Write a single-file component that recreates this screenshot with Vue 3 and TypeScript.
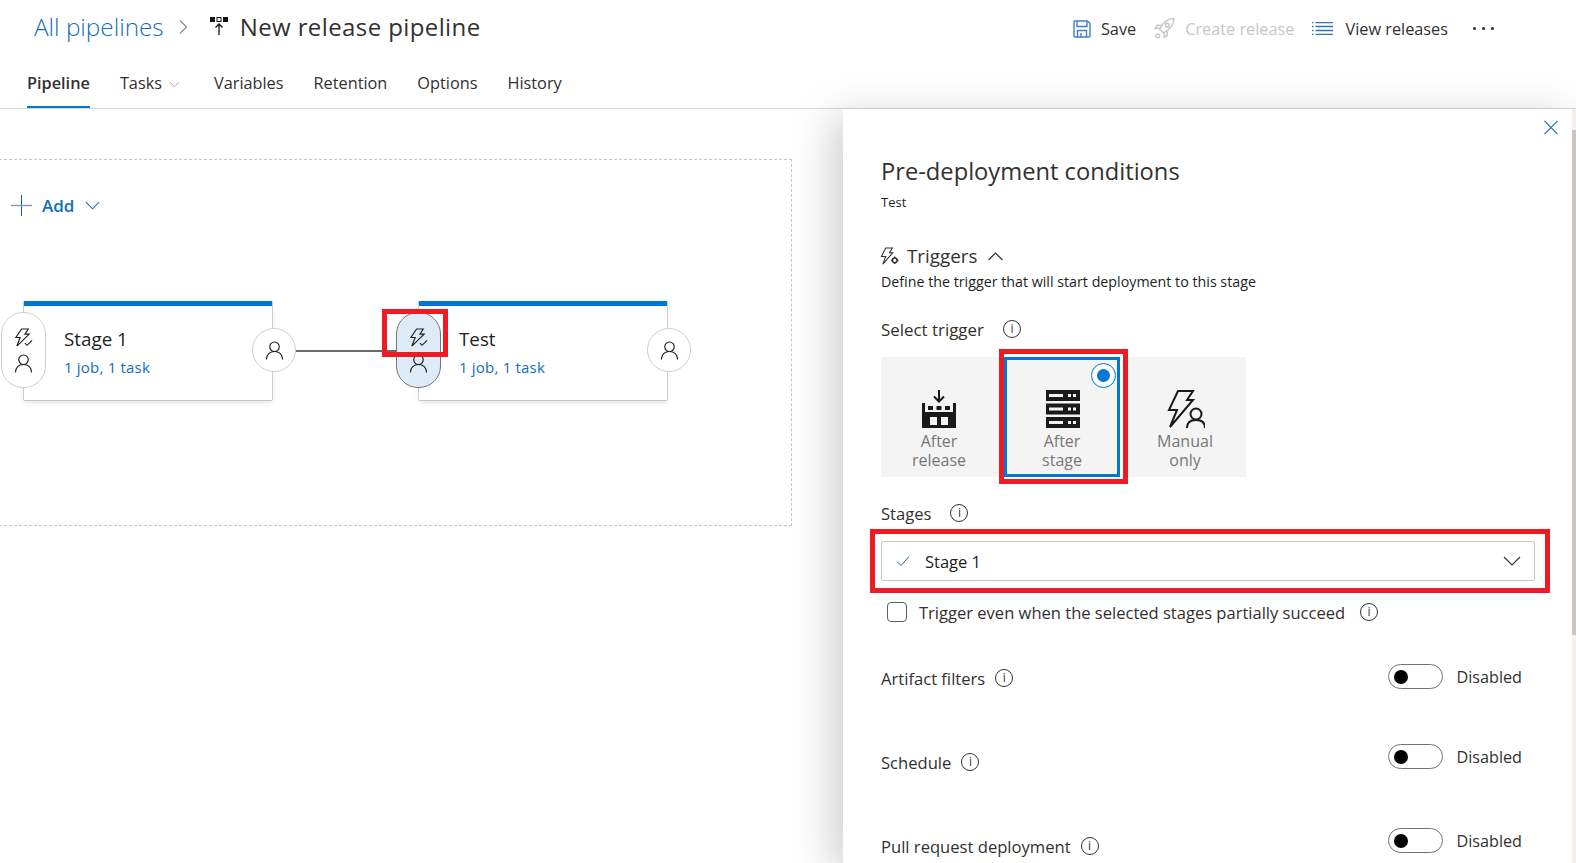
<template>
  <div class="page">
    <header class="top">
      <div class="title-row">
        <div class="crumbs">
          <a class="all">All pipelines</a>
          <svg class="crumb-sep" viewBox="0 0 9 14"><path d="M1 .5l6.500 6.500L1 13.500" fill="none" stroke="#8a8886" stroke-width="1.200" /></svg>
          <svg class="pipe-icon" viewBox="0 0 18 18">
            <rect x="0" y="0" width="5" height="5" fill="#111" />
            <rect x="7" y=".5" width="4" height="4" fill="#fff" stroke="#111" />
            <rect x="13" y="0" width="5" height="5" fill="#111" />
            <path d="M9 18V7M5.500 10.500L9 7l3.500 3.500" fill="none" stroke="#111" stroke-width="1.300" />
          </svg>
          <span class="name">New release pipeline</span>
        </div>
        <div class="actions">
          <span class="action">
            <svg class="act-icon" viewBox="0 0 18 18" fill="none" stroke="#3f7fd0" stroke-width="1.400">
              <path d="M2 1h12.500L17 3.500V16a1 1 0 0 1-1 1H2a1 1 0 0 1-1-1V2a1 1 0 0 1 1-1z" />
              <path d="M4 1v5.500h10V1M4.500 17v-6.500h9V17M8 13v4" />
            </svg>
            Save
          </span>
          <span class="action off">
            <svg class="act-icon rocket" viewBox="1 1 20.500 20.500" fill="none" stroke="#c8c6c4" stroke-width="1.400">
              <path d="M20.500 1.500c-5 .3-9 2.500-11.500 6.500L6.500 12l3.500 3.500 4-2.500c4-2.500 6.200-6.500 6.500-11.500z" />
              <circle cx="14" cy="8" r="1.800" />
              <path d="M8 8H4l-2 3h4.500M14 14v4l-3 2v-4.500M6.500 18.500a1.800 1.800 0 1 1-3.600 0 1.800 1.800 0 0 1 3.600 0z" />
            </svg>
            Create release
          </span>
          <span class="action view">
            <svg class="act-icon list" viewBox="0 0 21 13" fill="none" stroke="#2f6fc4" stroke-width="1.300">
              <path d="M3.500 .7H21M3.500 4.500H21M3.500 8.500H21M3.500 12.300H21" />
              <path d="M0 .7h1.500M0 4.500h1.500M0 8.500h1.500M0 12.300h1.500" />
            </svg>
            View releases
          </span>
          <span class="more"><i></i><i></i><i></i></span>
        </div>
      </div>
      <nav class="tabs">
        <span v-for="t in tabs" :key="t.label" class="tab" :class="{ on: t.active }">
          {{ t.label }}
          <svg v-if="t.menu" class="tab-chev" viewBox="0 0 12 7"><path d="M1 1l5 5 5-5" fill="none" stroke="#a19f9d" stroke-width="1" /></svg>
        </span>
      </nav>
    </header>

    <main class="body">
      <section class="canvas">
        <div class="frame">
          <div class="add">
            <svg class="plus" viewBox="0 0 21 21"><path d="M10.500 0v21" stroke="#0f5ea8" stroke-width="1" /><path d="M0 10.500h21" stroke="#7f9ab8" stroke-width="1.400" /></svg>
            <span>Add</span>
            <svg class="add-chev" viewBox="0 0 16 9"><path d="M1 1l7 7 7-7" fill="none" stroke="#106ebe" stroke-width="1.100" /></svg>
          </div>
        </div>
        <div class="wire"></div>

        <div v-for="s in stages" :key="s.name" class="stage" :style="{ left: s.left + 'px' }">
          <div class="stage-name">{{ s.name }}</div>
          <div class="stage-sub">1 job, 1 task</div>
          <div class="pill" :class="{ picked: s.picked }">
            <svg class="ic" viewBox="0 0 20 20" fill="none" stroke="#201f1e" stroke-width="1.200">
              <path d="M8 1h7l-3.500 5.500H16L3 19l3.500-9H2z" />
              <path d="M11.500 16l2.200 2.200L19 13" />
            </svg>
            <svg class="ic" viewBox="0 0 20 20" fill="none" stroke="#201f1e" stroke-width="1.200">
              <circle cx="10" cy="6" r="5" />
              <path d="M1.500 19.500c0-5 3.500-8.500 8.500-8.500s8.500 3.500 8.500 8.500" />
            </svg>
          </div>
          <div class="post">
            <svg class="ic" viewBox="0 0 20 20" fill="none" stroke="#201f1e" stroke-width="1.200">
              <circle cx="10" cy="6" r="5" />
              <path d="M1.500 19.500c0-5 3.500-8.500 8.500-8.500s8.500 3.500 8.500 8.500" />
            </svg>
          </div>
        </div>
        <div class="mark mark-node"></div>
      </section>

      <aside class="panel">
        <svg class="close" viewBox="0 0 16 16"><path d="M1 1l14 14M15 1L1 15" stroke="#106ebe" stroke-width="1.200" /></svg>
        <h1 class="panel-title">Pre-deployment conditions</h1>
        <div class="panel-sub">Test</div>

        <div class="sec-head">
          <svg class="sec-icon" viewBox="0 0 20 20" fill="none" stroke="#323130" stroke-width="1.100">
            <path d="M6 1h7l-3 5h3.500L3 18l3-8H1.500z" />
            <circle cx="15.500" cy="14" r="2.500" stroke-width="1.600" />
            <path d="M15.500 10v1.500M15.500 16.500V18M11.500 14H13M18 14h1.500" stroke-width="1.400" />
          </svg>
          <span>Triggers</span>
          <svg class="sec-chev" viewBox="0 0 16 9"><path d="M1 8l7-7 7 7" fill="none" stroke="#323130" stroke-width="1.200" /></svg>
        </div>
        <div class="sec-desc">Define the trigger that will start deployment to this stage</div>

        <div class="label trig-label">Select trigger <span class="info">i</span></div>
        <div class="trigger-row">
          <div class="trig">
            <svg class="trig-icon" viewBox="0 0 34 38">
              <path d="M17 0v11M12 6.500l5 5 5-5" fill="none" stroke="#1b1a19" stroke-width="2" />
              <path d="M0 13h3v9h28v-9h3v25H0z" fill="#1b1a19" />
              <rect x="6" y="16" width="5" height="4" fill="#1b1a19" />
              <rect x="14.500" y="16" width="5" height="4" fill="#1b1a19" />
              <rect x="23" y="16" width="5" height="4" fill="#1b1a19" />
              <rect x="8" y="27" width="7" height="8" fill="#f4f4f4" />
              <rect x="19" y="27" width="7" height="8" fill="#f4f4f4" />
            </svg>
            <div class="trig-text">After<br />release</div>
          </div>
          <div class="trig sel">
            <span class="radio"><i></i></span>
            <svg class="trig-icon server" viewBox="0 0 34 38">
              <g v-for="y in [0, 13.5, 27]" :key="y">
                <rect x="0" :y="y" width="34" height="11" fill="#1b1a19" />
                <rect x="3" :y="y + 4" width="14" height="3" fill="#f4f4f4" />
                <rect x="22" :y="y + 4" width="3" height="3" fill="#f4f4f4" />
                <rect x="27" :y="y + 4" width="3" height="3" fill="#f4f4f4" />
              </g>
            </svg>
            <div class="trig-text">After<br />stage</div>
          </div>
          <div class="trig">
            <svg class="trig-icon wide" viewBox="0 0 38 38" fill="none" stroke="#1b1a19" stroke-width="2">
              <path d="M11 1h15l-6 9h6L3 37l7-17H2z" />
              <circle cx="29" cy="24" r="5.500" />
              <path d="M20 38c0-5 3-8 9-8s9 3 9 8" />
            </svg>
            <div class="trig-text">Manual<br />only</div>
          </div>
          <div class="mark mark-trig"></div>
        </div>

        <div class="label stages-label">Stages <span class="info">i</span></div>
        <div class="mark-select">
          <div class="select">
            <svg class="sel-check" viewBox="0 0 14 12"><path d="M1 6.500L5 10.500 13 1.500" fill="none" stroke="#106ebe" stroke-width="1" /></svg>
            <span class="sel-value">Stage 1</span>
            <svg class="sel-chev" viewBox="0 0 18 10"><path d="M1 1l8 8 8-8" fill="none" stroke="#323130" stroke-width="1.100" /></svg>
          </div>
        </div>
        <div class="check-row">
          <span class="box"></span>
          <span>Trigger even when the selected stages partially succeed</span>
          <span class="info">i</span>
        </div>

        <div v-for="r in toggles" :key="r.label" class="toggle-row" :style="{ height: r.height + 'px' }">
          <div class="label row-label" :style="{ marginTop: r.drop + 'px' }">{{ r.label }} <span class="info">i</span></div>
          <div class="toggle-wrap">
            <span class="toggle"><i></i></span>
            <span class="toggle-text">Disabled</span>
          </div>
        </div>
        <div class="scroll"><div class="thumb"></div></div>
      </aside>
    </main>
  </div>
</template>

<script setup lang="ts">
const tabs = [
  { label: 'Pipeline', active: true },
  { label: 'Tasks', menu: true },
  { label: 'Variables' },
  { label: 'Retention' },
  { label: 'Options' },
  { label: 'History' }
]

const stages = [
  { name: 'Stage 1', left: 24, picked: false },
  { name: 'Test', left: 419, picked: true }
]

const toggles = [
  { label: 'Artifact filters', height: 80, drop: 3 },
  { label: 'Schedule', height: 84, drop: 7 },
  { label: 'Pull request deployment', height: 35, drop: 7 }
]
</script>

<style>
html,
body {
  margin: 0;
  background: #fff;
  overflow: hidden;
}
</style>

<style scoped>
.page {
  width: 1576px;
  height: 863px;
  overflow: hidden;
  font-family: "Open Sans", "Noto Sans", sans-serif;
  color: #323130;
  font-size: 16px;
  display: flex;
  flex-direction: column;
}

.top {
  height: 109px;
  box-sizing: border-box;
  border-bottom: 1px solid #d8d6d4;
  padding-left: 27px;
  padding-right: 82px;
  flex: none;
}

.title-row {
  display: flex;
  justify-content: space-between;
  align-items: center;
  height: 52px;
}

.crumbs {
  display: flex;
  align-items: center;
  padding-left: 7px;
  font-size: 24px;
}

.all {
  color: #106ebe;
  font-weight: 300;
  font-size: 24.3px;
}

.crumb-sep {
  width: 9px;
  height: 14px;
  margin: 2px 22px 0 15px;
}

.pipe-icon {
  width: 18px;
  height: 18px;
  margin-right: 12px;
}

.name {
  color: #323130;
  letter-spacing: 0.4px;
}

.actions {
  display: flex;
  align-items: center;
  font-size: 16.3px;
  margin-top: 5px;
}

.action {
  display: flex;
  align-items: center;
  gap: 10px;
  margin-right: 18px;
}

.action.view {
  gap: 12px;
}

.action.off {
  color: #c8c6c4;
}

.act-icon {
  width: 18px;
  height: 18px;
}

.act-icon.rocket {
  width: 21px;
  height: 21px;
}

.act-icon.list {
  width: 21px;
  height: 13px;
}

.more {
  display: flex;
  gap: 6px;
  margin-left: 7px;
}

.more i {
  width: 3px;
  height: 3px;
  border-radius: 50%;
  background: #323130;
}

.tabs {
  display: flex;
  gap: 30px;
  height: 56px;
}

.tab {
  box-sizing: border-box;
  height: 56px;
  padding-top: 20px;
  font-size: 16.3px;
  display: flex;
  gap: 7px;
  white-space: nowrap;
}

.tab.on {
  font-weight: 600;
  border-bottom: 2px solid #0078d4;
}

.tab-chev {
  width: 11px;
  height: 7px;
  margin-top: 9px;
  margin-right: 4px;
}

.body {
  flex: 1;
  display: flex;
  min-height: 0;
}

.canvas {
  position: relative;
  width: 843px;
  flex: none;
  background: #fff;
}

.frame {
  box-sizing: border-box;
  width: 793px;
  height: 367px;
  margin: 50px 0 0 -1px;
  border: 1px dashed #c8c6c4;
  padding: 34px 0 0 11px;
}

.add {
  display: flex;
  align-items: center;
  color: #106ebe;
  font-weight: 600;
  font-size: 17px;
}

.plus {
  width: 21px;
  height: 21px;
  margin-right: 10px;
}

.add-chev {
  width: 15px;
  height: 9px;
  margin-left: 11px;
}

.wire {
  position: absolute;
  left: 290px;
  top: 241px;
  width: 130px;
  height: 2px;
  background: #6b6a69;
}

.stage {
  position: absolute;
  top: 192px;
  width: 248px;
  height: 99px;
  box-sizing: border-box;
  background: #fff;
  border-top: 5px solid #0078d4;
  box-shadow: 1px 0 0 #d0cfcd, -1px 0 0 #d0cfcd, 0 1px 0 #c8c6c4, 0 3px 5px rgba(0, 0, 0, 0.1);
  padding: 20px 0 0 40px;
}

.stage-name {
  font-size: 18.8px;
  line-height: 26px;
  color: #201f1e;
}

.stage-sub {
  font-size: 15px;
  letter-spacing: 0.2px;
  line-height: 20px;
  margin-top: 5px;
  color: #106ebe;
}

.pill {
  position: absolute;
  left: -23px;
  top: 6px;
  width: 45px;
  height: 76px;
  box-sizing: border-box;
  border: 1px solid #d0cfcd;
  border-radius: 22px;
  background: #fff;
  display: flex;
  flex-direction: column;
  align-items: center;
  justify-content: center;
  gap: 7px;
}

.pill.picked {
  background: #deecf9;
  border-color: #767472;
}

.post {
  position: absolute;
  right: -24px;
  top: 22px;
  width: 44px;
  height: 44px;
  box-sizing: border-box;
  border: 1px solid #d0cfcd;
  border-radius: 50%;
  background: #fff;
  display: flex;
  align-items: center;
  justify-content: center;
}

.ic {
  width: 19px;
  height: 19px;
}

.mark {
  position: absolute;
  border: 5px solid #ed1c24;
  box-sizing: border-box;
  pointer-events: none;
}

.mark-node {
  left: 382px;
  top: 200px;
  width: 66px;
  height: 48px;
}

.panel {
  position: relative;
  flex: 1;
  box-sizing: border-box;
  padding: 46px 0 0 38px;
  box-shadow: -10px 8px 40px rgba(0, 0, 0, 0.2);
  background: #fff;
}

.close {
  position: absolute;
  right: 17px;
  top: 11px;
  width: 16px;
  height: 15px;
}

.panel-title {
  margin: 0;
  font-weight: 400;
  font-size: 23.7px;
  line-height: 32px;
}

.panel-sub {
  font-size: 13px;
  line-height: 18px;
  margin-top: 6px;
  color: #201f1e;
}

.sec-head {
  display: flex;
  align-items: center;
  margin-top: 32px;
  font-size: 18.8px;
  height: 26px;
}

.sec-icon {
  width: 19px;
  height: 19px;
  margin-left: -1px;
  margin-right: 8px;
}

.sec-chev {
  width: 17px;
  height: 9px;
  margin-left: 10px;
}

.sec-desc {
  font-size: 14.25px;
  line-height: 20px;
  margin-top: 3px;
  color: #201f1e;
}

.label {
  display: flex;
  align-items: center;
  font-size: 16.6px;
  gap: 10px;
  height: 22px;
  white-space: nowrap;
}

.trig-label {
  margin-top: 26px;
  font-size: 16.9px;
  gap: 19px;
}

.info {
  display: inline-flex;
  align-items: center;
  justify-content: center;
  width: 18px;
  height: 18px;
  box-sizing: border-box;
  border: 1px solid #323130;
  border-radius: 50%;
  font-size: 12px;
  line-height: 1;
}

.trigger-row {
  position: relative;
  display: flex;
  gap: 7px;
  box-sizing: border-box;
  width: 365px;
  margin-top: 17px;
  background: #f4f4f4;
  height: 120px;
}

.trig {
  position: relative;
  width: 116px;
  height: 120px;
  box-sizing: border-box;
  padding-top: 33px;
  display: flex;
  flex-direction: column;
  align-items: center;
}

.trig.sel {
  border: 3px solid #0078d4;
  padding-top: 30px;
  box-shadow: 0 0 0 3px #fff;
}

.trig-icon {
  width: 34px;
  height: 38px;
  flex: none;
}

.trig-icon.server {
  margin-left: 1px;
}

.trig-icon.wide {
  width: 38px;
  margin-left: 2px;
}

.trig-text {
  text-align: center;
  font-size: 16px;
  line-height: 19px;
  color: #797775;
  margin-top: 4px;
}

.radio {
  position: absolute;
  right: 1px;
  top: 3px;
  width: 25px;
  height: 25px;
  box-sizing: border-box;
  border: 1px solid #0078d4;
  border-radius: 50%;
  background: #fff;
  display: flex;
  align-items: center;
  justify-content: center;
}

.radio i {
  width: 13px;
  height: 13px;
  border-radius: 50%;
  background: #0078d4;
}

.mark-trig {
  left: 118px;
  top: -8px;
  width: 129px;
  height: 135px;
}

.stages-label {
  margin-top: 25px;
  gap: 19px;
}

.mark-select {
  box-sizing: border-box;
  width: 680px;
  height: 64px;
  margin: 5px 0 0 -11px;
  border: 5px solid #ed1c24;
  padding: 7px 10px 0 6px;
}

.select {
  box-sizing: border-box;
  height: 40px;
  border: 1px solid #c8c6c4;
  border-radius: 2px;
  display: flex;
  align-items: center;
  padding: 0 13px 0 14px;
  font-size: 16.5px;
  color: #201f1e;
}

.sel-check {
  width: 14px;
  height: 12px;
}

.sel-value {
  margin-left: 15px;
  flex: 1;
}

.sel-chev {
  width: 18px;
  height: 10px;
}

.check-row {
  display: flex;
  align-items: center;
  font-size: 16.55px;
  margin: 6px 0 0 6px;
  height: 26px;
  gap: 12px;
}

.box {
  width: 20px;
  height: 20px;
  box-sizing: border-box;
  border: 1px solid #605e5c;
  border-radius: 4px;
}

.check-row .info {
  margin-left: 3px;
}

.toggle-row {
  display: flex;
  justify-content: space-between;
  width: 641px;
  align-items: flex-start;
}

.check-row + .toggle-row {
  margin-top: 39px;
}

.toggle-wrap {
  display: flex;
  align-items: center;
  gap: 13px;
}

.toggle {
  display: flex;
  align-items: center;
  width: 55px;
  height: 25px;
  box-sizing: border-box;
  border: 1px solid #767472;
  border-radius: 13px;
  padding-left: 5px;
}

.toggle i {
  width: 14px;
  height: 14px;
  border-radius: 50%;
  background: #000;
}

.toggle-text {
  font-size: 16.2px;
  color: #323130;
}

.scroll {
  position: absolute;
  right: 0;
  top: 0;
  bottom: 0;
  width: 4px;
  background: #f3f2f1;
}

.thumb {
  width: 4px;
  margin-top: 21px;
  height: 505px;
  background: #c8c6c4;
}
</style>
